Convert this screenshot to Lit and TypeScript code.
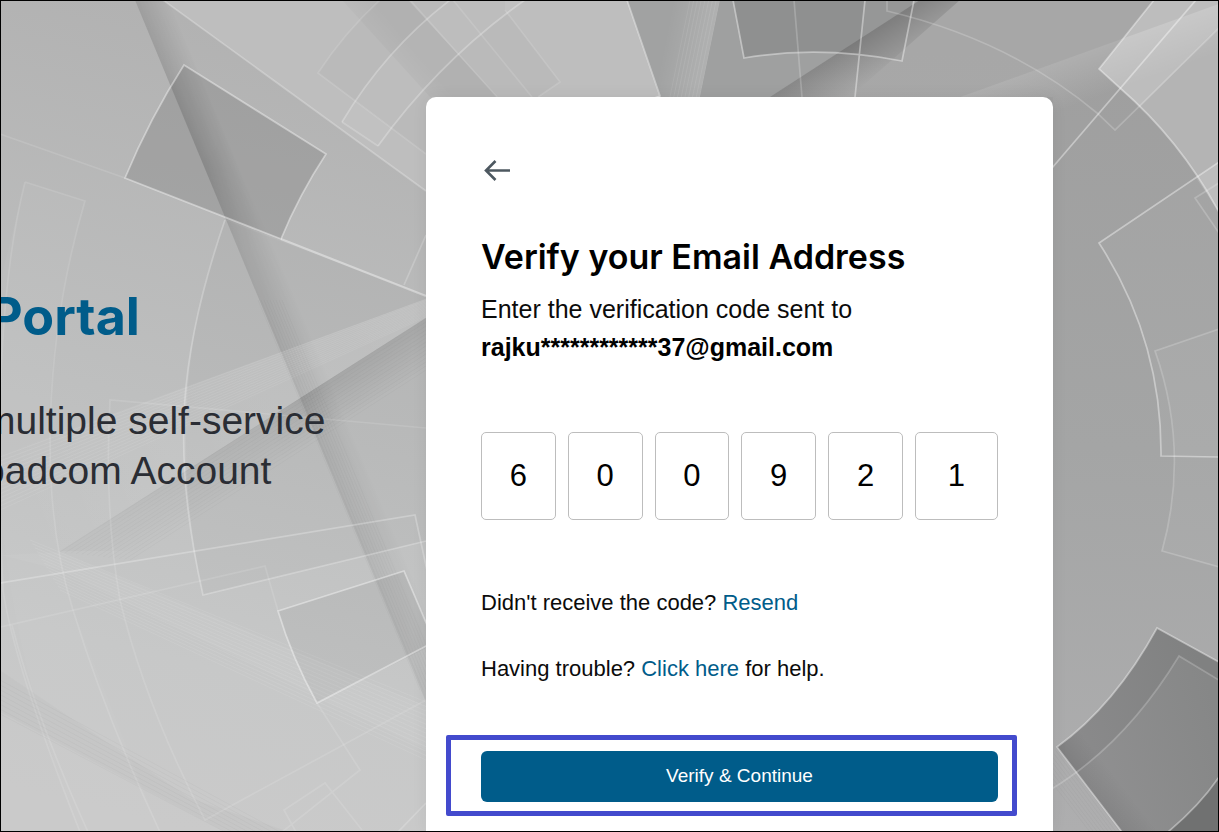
import { LitElement, html, css, svg } from "lit";
import { customElement, property, state } from "lit/decorators.js";

@customElement("portal-backdrop")
export class PortalBackdrop extends LitElement {
  static styles = css`
    :host {
      display: block;
    }
    .art {
      display: block;
      width: 100%;
      height: 100%;
    }
    .line {
      fill: none;
      stroke: #fff;
      stroke-width: 1.7;
      stroke-opacity: 0.4;
    }
    .wide {
      stroke-width: 2.2;
    }
    .mid {
      stroke-opacity: 0.26;
    }
    .soft {
      stroke-opacity: 0.2;
    }
    .faint {
      stroke-opacity: 0.12;
    }
    .hair {
      fill: none;
      stroke: #fff;
      stroke-width: 0.7;
      stroke-opacity: 0.12;
    }
    .hair.dark {
      stroke: #000;
      stroke-opacity: 0.04;
    }
  `;

  // A fan of thin rays, interpolated between two segments.
  private fan(a: number[], b: number[], count: number, cls: string) {
    const rays = Array.from({ length: count }, (_, i) => {
      const t = i / (count - 1);
      const p = a.map((v, k) => v + (b[k] - v) * t);
      return `M${p[0]} ${p[1]}L${p[2]} ${p[3]}`;
    });
    return svg`<path class=${cls} d=${rays.join("")} />`;
  }

  render() {
    return html`
      <svg class="art" viewBox="0 0 1219 832" preserveAspectRatio="xMidYMid slice" aria-hidden="true">
        <defs>
          <linearGradient id="left" gradientUnits="userSpaceOnUse" x1="250" y1="0" x2="60" y2="800">
            <stop offset="0" stop-color="#b1b1b1" />
            <stop offset="0.5" stop-color="#bebfbf" />
            <stop offset="0.8" stop-color="#c7c8c8" />
            <stop offset="1" stop-color="#cacaca" />
          </linearGradient>
          <linearGradient id="right" gradientUnits="userSpaceOnUse" x1="1100" y1="60" x2="1060" y2="832">
            <stop offset="0" stop-color="#9f9f9f" />
            <stop offset="0.5" stop-color="#a4a5a5" />
            <stop offset="1" stop-color="#aeaeaf" />
          </linearGradient>
          <linearGradient id="fold" gradientUnits="userSpaceOnUse" x1="222" y1="218" x2="255" y2="204">
            <stop offset="0" stop-color="#000" stop-opacity="0.17" />
            <stop offset="1" stop-color="#000" stop-opacity="0" />
          </linearGradient>
          <linearGradient id="foldfade" gradientUnits="userSpaceOnUse" x1="0" y1="0" x2="0" y2="832">
            <stop offset="0" stop-color="#fff" stop-opacity="0.75" />
            <stop offset="0.2" stop-color="#fff" />
            <stop offset="0.3" stop-color="#fff" stop-opacity="0.65" />
            <stop offset="0.6" stop-color="#fff" stop-opacity="0.4" />
            <stop offset="1" stop-color="#fff" stop-opacity="0.3" />
          </linearGradient>
          <mask id="foldmask" maskUnits="userSpaceOnUse" x="0" y="0" width="450" height="832">
            <rect width="450" height="832" fill="url(#foldfade)" />
          </mask>
          <linearGradient id="beam" gradientUnits="userSpaceOnUse" x1="426" y1="298" x2="0" y2="460">
            <stop offset="0" stop-color="#fff" stop-opacity="0.13" />
            <stop offset="0.5" stop-color="#fff" stop-opacity="0.09" />
            <stop offset="1" stop-color="#fff" stop-opacity="0" />
          </linearGradient>
          <linearGradient id="under" gradientUnits="userSpaceOnUse" x1="298" y1="398" x2="322" y2="435">
            <stop offset="0" stop-color="#000" stop-opacity="0.1" />
            <stop offset="1" stop-color="#000" stop-opacity="0" />
          </linearGradient>
          <linearGradient id="underfade" gradientUnits="userSpaceOnUse" x1="60" y1="551" x2="426" y2="318">
            <stop offset="0" stop-color="#fff" stop-opacity="0.15" />
            <stop offset="0.55" stop-color="#fff" stop-opacity="0.5" />
            <stop offset="0.65" stop-color="#fff" />
            <stop offset="1" stop-color="#fff" stop-opacity="0.8" />
          </linearGradient>
          <mask id="undermask" maskUnits="userSpaceOnUse" x="0" y="0" width="450" height="832">
            <rect width="450" height="832" fill="url(#underfade)" />
          </mask>
          <linearGradient id="shade" gradientUnits="userSpaceOnUse" x1="408" y1="40" x2="375" y2="68">
            <stop offset="0" stop-color="#000" stop-opacity="0.05" />
            <stop offset="1" stop-color="#000" stop-opacity="0" />
          </linearGradient>
          <linearGradient id="pleat" gradientUnits="userSpaceOnUse" x1="665" y1="40" x2="715" y2="50">
            <stop offset="0" stop-color="#fff" stop-opacity="0" />
            <stop offset="1" stop-color="#fff" stop-opacity="0.18" />
          </linearGradient>
          <linearGradient id="wedge" gradientUnits="userSpaceOnUse" x1="850" y1="45" x2="872" y2="82">
            <stop offset="0" stop-color="#000" stop-opacity="0.2" />
            <stop offset="1" stop-color="#000" stop-opacity="0" />
          </linearGradient>
          <linearGradient id="ray" gradientUnits="userSpaceOnUse" x1="1080" y1="54" x2="1096" y2="98">
            <stop offset="0" stop-color="#fff" stop-opacity="0.17" />
            <stop offset="1" stop-color="#fff" stop-opacity="0" />
          </linearGradient>
          <linearGradient id="slab" gradientUnits="userSpaceOnUse" x1="1080" y1="760" x2="1219" y2="720">
            <stop offset="0" stop-color="#909091" />
            <stop offset="1" stop-color="#868787" />
          </linearGradient>
          <linearGradient id="slabedge" gradientUnits="userSpaceOnUse" x1="1089" y1="790" x2="1112" y2="772">
            <stop offset="0" stop-color="#000" stop-opacity="0.08" />
            <stop offset="1" stop-color="#000" stop-opacity="0" />
          </linearGradient>
        </defs>

        <rect width="700" height="832" fill="url(#left)" />
        <rect x="660" width="559" height="832" fill="url(#right)" />

        <!-- upper left planes -->
        <path d="M163 0H627L660 97L426 191Z" fill="#bebebe" />
        <path d="M380 0Q345 32 318 73L426 154L538 97L560 82L505 10V0Z" fill="#000" fill-opacity="0.02" />
        <path d="M342 122L378 146Q440 60 525 0H450Q385 50 342 122Z" fill="#fff" fill-opacity="0.05" />
        <path d="M342 0H408L497 97H430Z" fill="url(#shade)" />
        <path class="line mid" d="M163 0L426 191" />
        <path class="line faint" d="M380 0Q345 32 318 73L426 154M410 0L497 97M453 0L532 97M505 10L560 82L538 97" />
        <path class="line mid" d="M378 146Q440 60 525 0M450 0Q385 50 342 122" />
        <path class="line soft" d="M342 122L378 146M404 285L426 235" />
        <path d="M135 0H163L426 191V702Z" fill="url(#fold)" mask="url(#foldmask)" />
        <path d="M184 65L326 154Q299 195 281 239L125 178Q150 118 184 65Z" fill="#000" fill-opacity="0.11" />
        <path class="line faint" d="M0 134L125 178" />
        <path class="line" d="M184 65L326 154Q299 195 281 239L125 178Q150 118 184 65Z" />
        <path class="line wide" d="M281 239L426 296" />

        <!-- middle left planes -->
        <path d="M225 220L426 296V541L203 595Q160 390 225 220Z" fill="#000" fill-opacity="0.025" />
        <path d="M25 182L85 201Q20 420 73 610L160 832H80Q-30 560 3 270Z" fill="#fff" fill-opacity="0.03" />
        <path d="M0 455L426 299V318L60 551L0 590Z" fill="url(#beam)" />
        <path d="M426 318L60 551L140 551L426 385Z" fill="url(#under)" mask="url(#undermask)" />
        ${this.fan([0, 457, 426, 299], [0, 510, 426, 317], 14, "hair")}
        ${this.fan([60, 552, 426, 318], [130, 560, 426, 370], 14, "hair dark")}
        ${this.fan([258, 300, 420, 690], [282, 300, 445, 690], 9, "hair dark")}
        <path class="line mid" d="M225 220C180 350 170 450 203 595L426 541" />
        <path class="line faint" d="M25 182L85 201C44 340 38 500 73 610Q105 715 160 832M25 182Q-10 320 3 590Q14 665 80 832M12 625Q35 715 88 832" />
        <path class="line faint" d="M426 428L110 400Q104 510 120 600Q145 705 205 820L426 700" />
        <path class="line mid" d="M0 583L415 515L428 575" />

        <!-- lower left planes -->
        <path d="M0 555L60 552L426 706V750L60 570Z" fill="#fff" fill-opacity="0.04" />
        <path d="M0 670L190 798L290 832H225L0 712Z" fill="#000" fill-opacity="0.015" />
        ${this.fan([30, 540, 426, 702], [60, 590, 426, 760], 14, "hair")}
        ${this.fan([0, 680, 280, 832], [0, 714, 225, 832], 8, "hair dark")}
        <path d="M278 611L404 571L430 632V646L317 703Q292 658 278 611Z" fill="#000" fill-opacity="0.045" />
        <path class="line" d="M430 632L404 571L278 611Q292 658 317 703L430 644" />
        <path class="line faint" d="M0 627L265 566L278 611M317 703L360 770L282 832M296 832L284 810L325 783L362 830" />
        <path class="line soft" d="M398 832L426 803" />

        <!-- top right planes -->
        <path d="M627 0H733L750 97H660Z" fill="#a1a2a2" />
        <path d="M662 0H720L700 97H640Z" fill="url(#pleat)" />
        ${this.fan([690, 0, 670, 97], [720, 0, 700, 97], 9, "hair")}
        <path class="line" d="M627 0L660 96L640 103" />
        <path d="M720 0H920L770 97H700Z" fill="#9fa0a0" />
        <path d="M733 0L744 58Q820 45 902 61L914 0Z" fill="#000" fill-opacity="0.05" />
        <path d="M733 0L744 58Q800 49 860 54L865 0Z" fill="#000" fill-opacity="0.045" />
        <path d="M920 0L770 97H960L1219 4V0Z" fill="#fff" fill-opacity="0.09" />
        <path d="M920 0L770 97H850L960 0Z" fill="url(#wedge)" />
        <path class="line" d="M733 0L744 58Q820 45 902 61L914 0M865 0L855 97" />
        <path class="line soft" d="M794 0L802 97" />
        <path d="M1154 0H1219V212Q1180 140 1120 88L1099 69Z" fill="#b4b4b4" />
        <path d="M1154 0L1099 69L1140 107L1219 28V0Z" fill="#fff" fill-opacity="0.12" />
        <path d="M960 97L1219 4V70L1053 130V97Z" fill="url(#ray)" />
        <path class="line soft" d="M887 0V11Q1010 40 1097 113L1115 130L1219 28" />
        <path class="line" d="M1154 0L1099 69L1120 88Q1180 140 1219 212" />
        <path class="line" d="M1196 0L1052 168" />

        <!-- right edge planes -->
        <path d="M1219 162L1099 243Q1162 340 1161 456L1219 457Z" fill="#fff" fill-opacity="0.04" />
        <path d="M1219 162L1196 178L1219 212Z" fill="#fff" fill-opacity="0.1" />
        <path d="M1219 329L1155 351Q1192 450 1162 551L1219 567Z" fill="#fff" fill-opacity="0.04" />
        <path class="line" d="M1219 162L1099 243Q1162 340 1161 456L1219 457" />
        <path class="line soft" d="M1219 183L1195 198L1219 233M1219 329L1155 351Q1190 450 1162 551L1219 567" />

        <!-- lower right slab -->
        ${this.fan([1057, 747, 1120, 832], [1046, 775, 1090, 832], 9, "hair dark")}
        <path d="M1219 662L1157 628Q1115 705 1057 747L1122 832H1219Z" fill="url(#slab)" />
        <path d="M1057 747L1122 832H1160L1080 728Z" fill="url(#slabedge)" />
        <path d="M1219 662L1157 628Q1115 705 1057 747L1076 772Q1138 725 1179 656L1219 680Z" fill="#000" fill-opacity="0.04" />
        <path d="M1168 832Q1200 805 1219 777V832Z" fill="#707171" />
        <path class="line soft" d="M1219 680L1179 656Q1125 745 1050 790" />
        <path class="line" d="M1219 662L1157 628Q1115 705 1057 747L1122 832M1168 832Q1200 805 1219 777" />
      </svg>
    `;
  }
}

@customElement("code-entry")
export class CodeEntry extends LitElement {
  static styles = css`
    :host {
      display: block;
    }
    .cells {
      display: grid;
      grid-template-columns: repeat(5, 9fr) 10fr;
      gap: 12px;
      margin: 0;
      padding: 0;
      border: 0;
      min-width: 0;
    }
    .cell {
      box-sizing: border-box;
      width: 100%;
      min-width: 0;
      height: 88px;
      margin: 0;
      padding: 0;
      border: 1px solid #bdbdbd;
      border-radius: 5px;
      background: #fff;
      color: #000;
      font: 31px "Liberation Sans", Arial, sans-serif;
      text-align: center;
      outline: none;
    }
    .cell:focus {
      border-color: #005c8a;
    }
  `;

  @property() value = "";

  render() {
    return html`
      <fieldset class="cells" aria-label="Verification code">
        ${this.value.split("").map(
          (digit, i) => html`<input
            class="cell"
            type="text"
            inputmode="numeric"
            maxlength="1"
            aria-label=${`Digit ${i + 1}`}
            .value=${digit}
          />`
        )}
      </fieldset>
    `;
  }
}

@customElement("app-root")
export class AppRoot extends LitElement {
  static styles = css`
    :host {
      display: block;
      font-family: "Liberation Sans", Arial, sans-serif;
      color: #0b0b0b;
    }
    .page {
      box-sizing: border-box;
      position: relative;
      display: grid;
      grid-template-columns: 425fr 627fr 165fr;
      height: 100vh;
      overflow: hidden;
      border: 1px solid #000;
    }
    .backdrop {
      position: absolute;
      inset: -1px;
    }
    .hero {
      position: relative;
      padding-top: 284px;
      overflow: hidden;
      white-space: nowrap;
    }
    .brand {
      margin: 0 0 47px -12px;
      color: #005c8a;
      font: 700 52px/64px Inter, sans-serif;
    }
    .pitch {
      margin: 0 0 0 -18px;
      color: #2a2d34;
      font-size: 39px;
      line-height: 50px;
    }
    .card {
      box-sizing: border-box;
      position: relative;
      margin-top: 96px;
      padding: 60px 55px 0;
      border-radius: 10px 10px 0 0;
      background: #fff;
      box-shadow: 0 0 16px rgba(0, 0, 0, 0.06);
    }
    .back {
      display: block;
      margin: 0;
      padding: 0;
      border: 0;
      background: none;
      color: #4d5860;
      cursor: pointer;
    }
    .arrow {
      display: block;
      width: 32px;
      height: 28px;
    }
    .title {
      margin: 52px 0 13px;
      color: #000;
      font: 600 34px/40px Inter, sans-serif;
      white-space: nowrap;
    }
    .lead {
      margin: 0 0 66px;
      font-size: 25px;
      line-height: 38px;
    }
    .address {
      display: block;
      color: #000;
    }
    .note {
      margin: 40px 0 0;
      font-size: 22px;
      line-height: 26px;
    }
    .first {
      margin-top: 70px;
    }
    .link {
      color: #005c8a;
      text-decoration: none;
    }
    .action {
      position: relative;
      margin-top: 69px;
    }
    .submit {
      display: block;
      width: 100%;
      height: 51px;
      margin: 0;
      padding: 0 0 2px;
      border: 0;
      border-radius: 6px;
      background: #005c8a;
      color: #fff;
      font: 19px "Liberation Sans", Arial, sans-serif;
      cursor: pointer;
    }
    .marker {
      position: absolute;
      inset: -16px -19px -14px -35px;
      border: 5px solid #434acd;
      border-radius: 2px;
      pointer-events: none;
    }
  `;

  @state() private code = "600921";

  render() {
    return html`
      <main class="page">
        <portal-backdrop class="backdrop"></portal-backdrop>
        <section class="hero">
          <h1 class="brand">Portal</h1>
          <p class="pitch">multiple self-service<br />oadcom Account</p>
        </section>
        <form class="card" @submit=${(e: Event) => e.preventDefault()}>
          <button class="back" type="button" aria-label="Back">
            <svg class="arrow" viewBox="0 0 32 28" fill="none" stroke="currentColor" stroke-width="2.6" aria-hidden="true">
              <path d="M29 13.5H5M14.5 4L5 13.5L14.5 23" />
            </svg>
          </button>
          <h2 class="title">Verify your Email Address</h2>
          <p class="lead">
            Enter the verification code sent to
            <strong class="address">rajku************37@gmail.com</strong>
          </p>
          <code-entry .value=${this.code}></code-entry>
          <p class="note first">Didn't receive the code? <a class="link" href="#resend">Resend</a></p>
          <p class="note">Having trouble? <a class="link" href="#help">Click here</a> for help.</p>
          <div class="action">
            <button class="submit" type="submit">Verify &amp; Continue</button>
            <div class="marker"></div>
          </div>
        </form>
      </main>
    `;
  }
}
